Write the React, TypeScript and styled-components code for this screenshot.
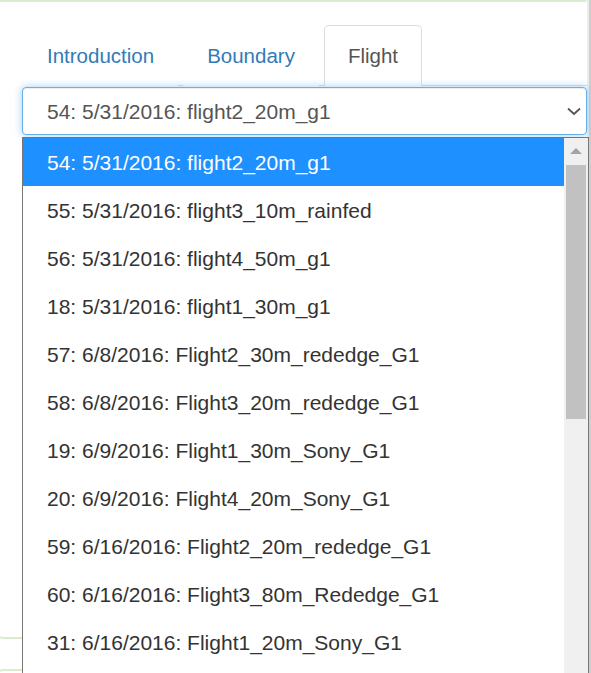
import React from "react";
import styled, { createGlobalStyle } from "styled-components";

const GlobalStyle = createGlobalStyle`
  html, body {
    margin: 0;
    padding: 0;
    background: #ffffff;
    overflow: hidden;
  }
  body {
    font-family: "Liberation Sans", Arial, sans-serif;
  }
  * { box-sizing: border-box; }
`;

const Page = styled.div`
  display: flex;
  height: 673px;
  overflow: hidden;
`;

const Main = styled.div`
  position: relative;
  flex: 1;
  min-width: 0;
`;

const EdgeStrip = styled.div`
  width: 4px;
  flex: none;
  background: linear-gradient(to right, #ececec 0 2px, #cfcfcf 2px 4px);
`;

const TopRule = styled.div`
  height: 2px;
  background: #d9ecd0;
  border-bottom-right-radius: 2px;
`;

const ContentPanel = styled.div`
  height: 637px;
  margin-left: -3px;
  padding: 23px 0 0 25px;
  border-left: 2px solid #d9ecd0;
  border-bottom: 2px solid #d9ecd0;
  border-bottom-left-radius: 6px;
`;

const NextPanel = styled.div`
  height: 40px;
  margin-top: 30px;
  margin-left: -3px;
  border-left: 2px solid #d9ecd0;
  border-top: 2px solid #d9ecd0;
  border-top-left-radius: 6px;
`;

const Nav = styled.ul`
  display: flex;
  margin: 0 0 0 -1px;
  padding: 0;
  list-style: none;
  border-bottom: 1px solid #dddddd;
`;

const Tab = styled.li<{ $active?: boolean }>`
  margin: 0 5px -1px 0;
  padding: 16px 23px;
  font-size: 20.5px;
  line-height: 27px;
  border: 1px solid ${(p) => (p.$active ? "#dddddd" : "transparent")};
  border-bottom-color: transparent;
  border-radius: 5px 5px 0 0;
  background: #ffffff;
  color: ${(p) => (p.$active ? "#555555" : "#337ab7")};
  cursor: pointer;
`;

const SelectWrap = styled.div`
  position: relative;
  margin: 1px 0 0 -2px;
`;

const SelectBox = styled.div`
  display: flex;
  align-items: center;
  height: 48px;
  padding: 1px 4px 0 24px;
  border: 1px solid #66afe9;
  border-radius: 4px;
  background: #ffffff;
  box-shadow: inset 0 1px 1px rgba(0, 0, 0, 0.075), 0 0 8px rgba(102, 175, 233, 0.6);
  color: #555555;
  font-size: 21px;
`;

const SelectValue = styled.span`
  flex: 1;
  white-space: nowrap;
`;

const Chevron = styled.svg`
  width: 16px;
  height: 16px;
  flex: none;
  margin-top: -1px;
`;

const Dropdown = styled.div`
  position: absolute;
  top: calc(100% + 2px);
  left: 0;
  right: -2px;
  height: 560px;
  display: flex;
  border: 1px solid #767676;
  background: #ffffff;
  z-index: 10;
`;

const OptionList = styled.div`
  flex: 1;
  min-width: 0;
`;

const Option = styled.div<{ $selected?: boolean }>`
  height: 48px;
  padding: 1px 0 0 24px;
  line-height: 48px;
  font-size: 21px;
  white-space: nowrap;
  color: ${(p) => (p.$selected ? "#ffffff" : "#333333")};
  background: ${(p) => (p.$selected ? "#1e90ff" : "#ffffff")};
`;

const ScrollTrack = styled.div`
  width: 24px;
  flex: none;
  display: flex;
  flex-direction: column;
  align-items: center;
  background: #f0f0f0;
`;

const ScrollButton = styled.div`
  height: 26px;
  width: 100%;
  display: flex;
  align-items: center;
  justify-content: center;
`;

const ArrowUp = styled.div`
  width: 0;
  height: 0;
  border-left: 6px solid transparent;
  border-right: 6px solid transparent;
  border-bottom: 6px solid #a3a3a3;
`;

const ScrollThumb = styled.div`
  margin-top: 1px;
  width: 20px;
  height: 254px;
  background: #c1c1c1;
`;

const options = [
  "54: 5/31/2016: flight2_20m_g1",
  "55: 5/31/2016: flight3_10m_rainfed",
  "56: 5/31/2016: flight4_50m_g1",
  "18: 5/31/2016: flight1_30m_g1",
  "57: 6/8/2016: Flight2_30m_rededge_G1",
  "58: 6/8/2016: Flight3_20m_rededge_G1",
  "19: 6/9/2016: Flight1_30m_Sony_G1",
  "20: 6/9/2016: Flight4_20m_Sony_G1",
  "59: 6/16/2016: Flight2_20m_rededge_G1",
  "60: 6/16/2016: Flight3_80m_Rededge_G1",
  "31: 6/16/2016: Flight1_20m_Sony_G1",
];

export default function App() {
  return (
    <>
      <GlobalStyle />
      <Page>
        <Main>
          <TopRule />
          <ContentPanel>
            <Nav>
              <Tab>Introduction</Tab>
              <Tab>Boundary</Tab>
              <Tab $active>Flight</Tab>
            </Nav>
            <SelectWrap>
              <SelectBox>
                <SelectValue>{options[0]}</SelectValue>
                <Chevron viewBox="0 0 16 16">
                  <path d="M2 5.5 L8 11 L14 5.5" fill="none" stroke="#555" strokeWidth="1.8" />
                </Chevron>
              </SelectBox>
              <Dropdown>
                <OptionList>
                  {options.map((o, i) => (
                    <Option key={o} $selected={i === 0}>
                      {o}
                    </Option>
                  ))}
                </OptionList>
                <ScrollTrack>
                  <ScrollButton>
                    <ArrowUp />
                  </ScrollButton>
                  <ScrollThumb />
                </ScrollTrack>
              </Dropdown>
            </SelectWrap>
          </ContentPanel>
          <NextPanel />
        </Main>
        <EdgeStrip />
      </Page>
    </>
  );
}
